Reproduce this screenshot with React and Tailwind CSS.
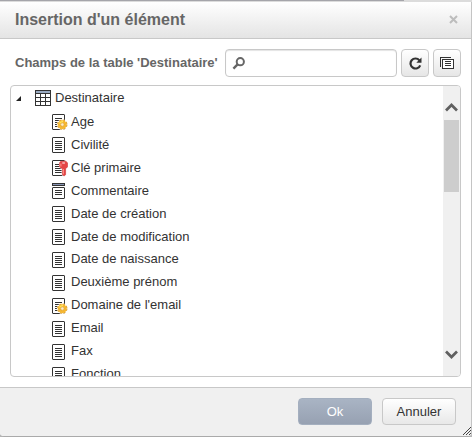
import React from "react";

const FIELDS = [
  { label: "Age", badge: "gear" },
  { label: "Civilité" },
  { label: "Clé primaire", badge: "key" },
  { label: "Commentaire", badge: "memo" },
  { label: "Date de création" },
  { label: "Date de modification" },
  { label: "Date de naissance" },
  { label: "Deuxième prénom" },
  { label: "Domaine de l'email", badge: "gear" },
  { label: "Email" },
  { label: "Fax" },
  { label: "Fonction" },
];

function FieldIcon({ badge }) {
  return (
    <svg width="16" height="17" viewBox="0 0 16 17" fill="none" className="shrink-0">
      {badge === "memo" ? (
        <g>
          <path d="M0 0h13v3H0z" fill="#333" />
          <path d="M1 1h11v1H1z" fill="#8795b5" />
          <rect x="0.5" y="4.5" width="12" height="11" rx="0.5" fill="#fff" stroke="#333" />
          <path d="M3 7.5h7M3 9.5h7M3 11.5h7" stroke="#333" />
        </g>
      ) : (
        <g>
          <rect x="0.5" y="0.5" width="12" height="15" rx="0.5" fill="#fff" stroke="#333" />
          <path d="M3 4.5h7M3 6.5h7M3 8.5h7M3 10.5h7M3 12.5h7" stroke="#333" />
        </g>
      )}
      {badge === "gear" && (
        <g>
          <circle cx="10.3" cy="10.6" r="5.4" fill="#fff" />
          <circle cx="10.3" cy="10.6" r="4.6" stroke="#e0a030" strokeWidth="1.2" strokeDasharray="2.3 1.3" />
          <circle cx="10.3" cy="10.6" r="3" stroke="#f5b731" strokeWidth="2.8" />
          <path d="M7.4 9.4Q8.6 7.6 11 7.8" stroke="#ffe45a" strokeWidth="1.5" />
          <circle cx="10.3" cy="10.6" r="1.6" fill="#fdeec8" stroke="#d09030" strokeWidth="0.5" />
        </g>
      )}
      {badge === "key" && (
        <g>
          <path d="M8 1h6.5L16 2.5v5L14.3 9.5v5.8L11.8 16.5 9.6 15V9L7 7.5V2.5z" fill="#fff" />
          <path d="M8.8 1.2h5l1.7 1.6v4.1L13.6 8.8v6L12 16l-1.6-1.4V8.8L7.6 7V2.8z" fill="#e54545" stroke="#cf3636" strokeWidth="0.6" />
          <path d="M8.9 3.5v3M11.3 9v5.2" stroke="#ff9a92" />
          <path d="M10.3 3h2.6" stroke="#fff" />
        </g>
      )}
    </svg>
  );
}

function TableIcon() {
  return (
    <svg width="16" height="16" viewBox="0 0 16 16" fill="none" className="shrink-0">
      <path d="M0 0h16v16H0z" fill="#333" />
      <path d="M1 1h14v2H1z" fill="#9aabc2" />
      <path
        d="M1 4h4v3H1zM6 4h4v3H6zM11 4h4v3h-4zM1 8h4v3H1zM6 8h4v3H6zM11 8h4v3h-4zM1 12h4v3H1zM6 12h4v3H6zM11 12h4v3h-4z"
        fill="#fff"
      />
    </svg>
  );
}

function IconButton({ label, children }) {
  return (
    <button
      aria-label={label}
      className="flex h-7 w-7 shrink-0 items-center justify-center rounded-[4px] border border-[#c8c8c8] bg-linear-to-b from-white to-[#e6e6e6]"
    >
      {children}
    </button>
  );
}

export default function App() {
  return (
    <div className="h-[441px] w-[476px] overflow-hidden bg-white font-['Liberation_Sans',Arial,sans-serif] text-[13px] text-[#333]">
      <div className="flex h-[2px] w-[472px] bg-[#dcdcdc]">
        <div className="h-px w-[404px] bg-[#a5a5aa]" />
      </div>
      <div className="w-[472px] bg-[#b5b5b5]">
        <div className="relative flex h-[435px] flex-col overflow-hidden rounded-b-[4px] border-r border-b border-r-[#c4c4c4] border-b-[#aaa] bg-white">
          <header className="flex h-[37px] shrink-0 items-center justify-between border-b border-[#c8c8c8] bg-linear-to-b from-white to-[#e4e4e4] pr-[13px] pl-[15px]">
            <h1 className="text-[16px] leading-[18px] font-bold whitespace-nowrap text-[#666]">Insertion d'un élément</h1>
            <svg width="9" height="9" viewBox="0 0 9 9" fill="none" className="-mt-0.5">
              <path d="M1 1l7 7M8 1L1 8" stroke="#bdbdbd" strokeWidth="2" />
            </svg>
          </header>

          <div className="flex h-[46px] shrink-0 items-center pt-[2px] pr-[9px] pl-[15px]">
            <span className="w-[210px] shrink-0 text-[13px] font-bold whitespace-nowrap text-[#666]">
              Champs de la table 'Destinataire'
            </span>
            <div className="mr-1 flex h-7 w-[172px] items-center rounded-[4px] border border-[#c8c8c8] bg-white pl-[6px] shadow-[inset_0_1px_1px_#e4e4e4]">
              <svg width="13" height="13" viewBox="0 0 13 13" fill="none">
                <circle cx="8.3" cy="4.7" r="3.6" stroke="#666" strokeWidth="2" />
                <path d="M5.6 7.4L1.4 11.6" stroke="#666" strokeWidth="2.4" />
              </svg>
            </div>
            <div className="flex gap-1">
              <IconButton label="Actualiser">
                <svg width="13" height="13" viewBox="0 0 13 13" fill="none">
                  <path d="M10.3 3.2A5 5 0 1 0 11.2 8.3" stroke="#333" strokeWidth="2.2" />
                  <path d="M12.5 0.5v5.2H7.3z" fill="#333" />
                </svg>
              </IconButton>
              <IconButton label="Affichage">
                <svg width="14" height="12" viewBox="0 0 14 12" fill="none" shapeRendering="crispEdges">
                  <path d="M0.5 10V0.5H11" stroke="#333" />
                  <path d="M2.5 2.5h11v9h-11z" fill="#fff" stroke="#333" />
                  <path d="M5 4.5h6M5 6.5h6M5 8.5h6" stroke="#333" />
                </svg>
              </IconButton>
            </div>
          </div>

          <div className="mr-[10px] ml-[10px] flex h-[292px] shrink-0 overflow-hidden rounded-[4px] border border-[#c8c8c8] bg-white">
            <div className="flex-1 overflow-hidden">
              <div className="flex h-[24px] items-center pl-[5px]">
                <svg width="5" height="5" viewBox="0 0 5 5" className="mr-[14px]">
                  <path d="M5 0v5H0z" fill="#222" />
                </svg>
                <TableIcon />
                <span className="ml-[4px]">Destinataire</span>
              </div>
              <ul>
                {FIELDS.map((field, index) => (
                  <li key={field.label} className="flex h-[23px] items-start pl-[41px]">
                    <span className="pt-[4px]">
                      <FieldIcon badge={field.badge} />
                    </span>
                    <span
                      className={`ml-[3px] leading-[19px] whitespace-nowrap ${index < 6 ? "pt-[2px]" : "pt-[1px]"}`}
                    >
                      {field.label}
                    </span>
                  </li>
                ))}
              </ul>
            </div>
            <div className="flex w-[17px] flex-col items-center bg-[#f0f0f0]">
              <svg width="13" height="9" viewBox="0 0 13 9" fill="none" className="mt-[17px]">
                <path d="M1 7.5l5.5-5.5L12 7.5" stroke="#606060" strokeWidth="2.7" />
              </svg>
              <div className="mt-[8px] h-[72px] w-[15px] bg-[#cdcdcd]" />
              <svg width="13" height="9" viewBox="0 0 13 9" fill="none" className="mt-auto mb-[17px]">
                <path d="M1 1.5L6.5 7 12 1.5" stroke="#606060" strokeWidth="2.7" />
              </svg>
            </div>
          </div>

          <footer className="mt-[10px] flex flex-1 items-start justify-end gap-[10px] border-t border-[#c8c8c8] bg-[#f0f0f0] pt-[10px] pr-[15px]">
            <button className="h-[27px] w-[74px] rounded-[4px] border border-[#a4afbf] bg-linear-to-b from-[#a9b4c4] to-[#97a1b2] text-[13px] leading-[25px] text-white">
              Ok
            </button>
            <button className="h-[27px] w-[74px] rounded-[4px] border border-[#c8c8c8] bg-linear-to-b from-white to-[#e8e8e8] text-[13px] leading-[25px] text-[#333]">
              Annuler
            </button>
          </footer>
          <svg width="8" height="8" viewBox="0 0 8 8" fill="none" className="absolute right-0 bottom-[1px]" shapeRendering="crispEdges">
            <path d="M0 8L8 0M3 8L8 3M6 8L8 6" stroke="#444" />
          </svg>
        </div>
      </div>
    </div>
  );
}
